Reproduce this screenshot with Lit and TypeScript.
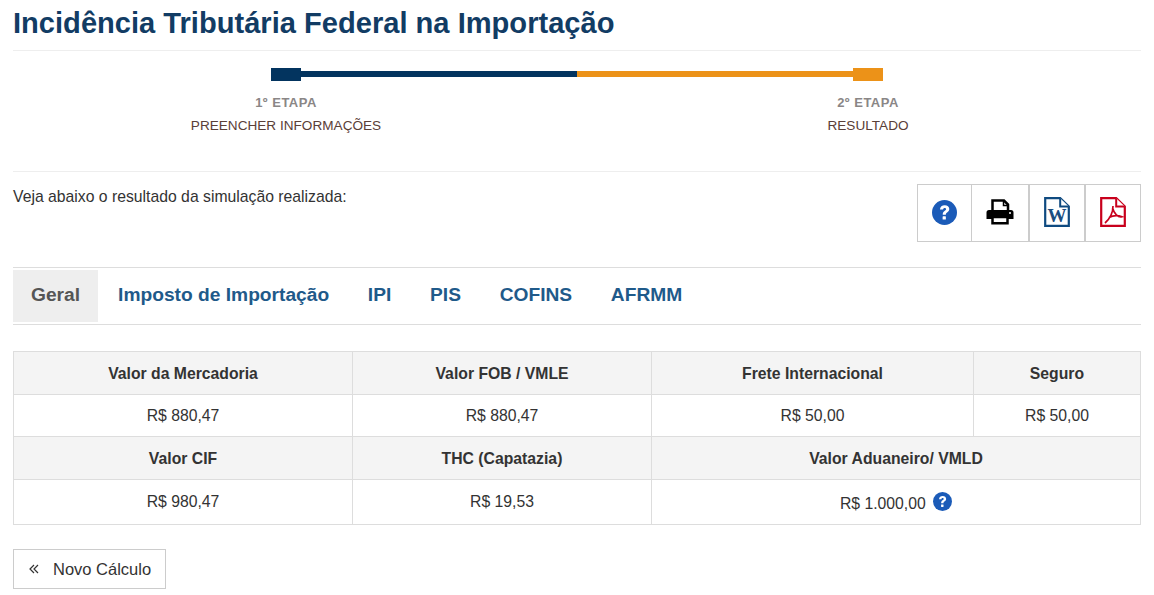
import { LitElement, html, css, svg } from "lit";
import { customElement } from "lit/decorators.js";

const help = (size: number) => html`<svg class="help" width=${size} height=${size} viewBox="0 0 24 24">
  <circle cx="12" cy="12" r="12" fill="#1b5bb8"></circle>
  <path d="M7.600 9.200C7.800 6.400 9.700 5 12.200 5c2.600 0 4.400 1.500 4.400 3.700 0 1.600-.9 2.500-2.100 3.300-1 .7-1.200 1-1.200 2.100h-3c0-1.900.5-2.700 1.700-3.600 1-.7 1.500-1.100 1.500-1.700 0-.7-.6-1.100-1.300-1.100-.9 0-1.500.6-1.600 1.500z" fill="#fff"></path>
  <rect x="10.200" y="15.700" width="3.100" height="3.100" rx=".4" fill="#fff"></rect>
</svg>`;

const printer = svg`<svg width="28" height="26" viewBox="0 0 28 26">
  <path d="M6.500 12V1.500h11.500l4 4V12" fill="#fff" stroke="#000" stroke-width="2.500"></path>
  <path d="M17.500 2v4.500h4.500" fill="none" stroke="#000" stroke-width="1.500"></path>
  <path d="M3 11h22a2.500 2.500 0 0 1 2.500 2.500V20H.5v-6.500A2.500 2.500 0 0 1 3 11z" fill="#000"></path>
  <circle cx="24" cy="14" r="1" fill="#fff"></circle>
  <path d="M6.500 18h15v6.200h-15z" fill="#fff" stroke="#000" stroke-width="2.500"></path>
</svg>`;

const word = svg`<svg width="26" height="30" viewBox="0 0 26 30">
  <path d="M1.200 1.200h15L24.800 9.500V28.800H1.200z" fill="#fff" stroke="#0f4a80" stroke-width="2.200"></path>
  <path d="M16.200 1.200v8.300h8.600" fill="#fff" stroke="#0f4a80" stroke-width="2"></path>
  <text x="13" y="25" text-anchor="middle" font-family="Liberation Serif" font-weight="700" font-size="19" fill="#1c4d80">W</text>
</svg>`;

const pdf = svg`<svg width="26" height="30" viewBox="0 0 26 30">
  <path d="M1.200 1.200h15L24.800 9.500V28.800H1.200z" fill="#fff" stroke="#c8001c" stroke-width="2.200"></path>
  <path d="M16.200 1.200v8.300h8.600" fill="#fff" stroke="#c8001c" stroke-width="2"></path>
  <path d="M13 9c0 6-3 12.500-8 17M9 20.500c4-2 9-2.200 13-.7-4 1-8-3-9.500-9" fill="none" stroke="#c8001c" stroke-width="1.700"></path>
</svg>`;

@customElement("app-root")
export class AppRoot extends LitElement {
  static styles = css`
    :host {
      display: block;
      font-family: "Liberation Sans", Arial, sans-serif;
      padding: 0 13px;
      color: #333;
      font-size: 15.75px;
    }
    h1 {
      margin: 0;
      height: 51px;
      box-sizing: border-box;
      padding-top: 7px;
      line-height: 32px;
      font-size: 29.1px;
      font-weight: 700;
      color: #123c64;
      border-bottom: 1px solid #eee;
    }
    .stepper {
      height: 120px;
      border-bottom: 1px solid #eee;
      padding: 0 258px;
      display: flex;
      flex-direction: column;
    }
    .bar {
      display: flex;
      align-items: flex-start;
      height: 13px;
      margin-top: 17px;
    }
    .bar span { display: block; flex: none; }
    .cap { width: 30px; height: 13px; }
    .bar .line { height: 6px; flex: 1; margin-top: 3px; }
    .blue { background: #03345f; }
    .orange { background: #ec9218; }
    .labels {
      display: flex;
      justify-content: space-between;
      margin: 0 -120px;
      padding-top: 14px;
    }
    .step { width: 270px; text-align: center; }
    .step b {
      display: block;
      font-size: 13px;
      letter-spacing: 0.5px;
      line-height: 16px;
      color: #8a8686;
    }
    .step small {
      display: block;
      margin-top: 7px;
      font-size: 13.6px;
      line-height: 16px;
      color: #5a4038;
    }
    .intro {
      display: flex;
      justify-content: space-between;
      padding-top: 12px;
      box-sizing: border-box;
      border-bottom: 1px solid #ddd;
      height: 96px;
    }
    .intro p { margin: 1px 0 0; line-height: 24px; color: #333; }
    .tools {
      display: flex;
      flex: none;
      align-self: flex-start;
      width: 224px;
      height: 58px;
      box-sizing: border-box;
      border: 1px solid #ccc;
    }
    .tools div {
      display: flex;
      align-items: center;
      justify-content: center;
      flex: none;
      box-sizing: border-box;
      padding-bottom: 2px;
    }
    .tools div:nth-child(1) { width: 54px; border-right: 1px solid #ccc; }
    .tools div:nth-child(2) { width: 58px; border-right: 2px solid #ccc; }
    .tools div:nth-child(3) { width: 56px; border-right: 2px solid #ccc; }
    .tools div:nth-child(4) { width: 54px; }
    .tabs {
      display: flex;
      height: 57px;
      box-sizing: border-box;
      border-bottom: 1px solid #ddd;
      padding-top: 2px;
      margin-bottom: 26px;
    }
    .tab {
      height: 52px;
      line-height: 50px;
      padding: 0 18px;
      font-size: 19.2px;
      font-weight: 700;
      color: #1f5a8a;
      margin-right: 2.7px;
    }
    .tab.active { background: #eee; color: #555; margin-right: 2px; }
    table {
      width: 1127px;
      border-collapse: collapse;
      table-layout: fixed;
      font-size: 15.75px;
      color: #333;
    }
    th, td {
      border: 1px solid #ddd;
      text-align: center;
      padding: 0;
    }
    th { background: #f4f4f4; height: 40px; padding-top: 2px; font-weight: 700; }
    td { height: 41px; }
    tr.last td { height: 44px; }
    .help { vertical-align: -2px; margin-left: 3px; }
    .tools .help { margin-left: 0; }
    .back {
      display: inline-flex;
      align-items: center;
      margin-top: 24px;
      height: 40px;
      width: 153px;
      box-sizing: border-box;
      border: 1px solid #ccc;
      padding-left: 15px;
      color: #333;
      font-size: 16.5px;
      gap: 14px;
    }
  `;

  render() {
    return html`
      <h1>Incidência Tributária Federal na Importação</h1>
      <section class="stepper">
        <div class="bar">
          <span class="cap blue"></span>
          <span class="line blue"></span>
          <span class="line orange"></span>
          <span class="cap orange"></span>
        </div>
        <div class="labels">
          <div class="step"><b>1º ETAPA</b><small>PREENCHER INFORMAÇÕES</small></div>
          <div class="step"><b>2º ETAPA</b><small>RESULTADO</small></div>
        </div>
      </section>
      <section class="intro">
        <p>Veja abaixo o resultado da simulação realizada:</p>
        <div class="tools">
          <div>${help(25)}</div>
          <div>${printer}</div>
          <div>${word}</div>
          <div>${pdf}</div>
        </div>
      </section>
      <nav class="tabs">
        <div class="tab active">Geral</div>
        <div class="tab">Imposto de Importação</div>
        <div class="tab">IPI</div>
        <div class="tab">PIS</div>
        <div class="tab">COFINS</div>
        <div class="tab">AFRMM</div>
      </nav>
      <table>
        <colgroup>
          <col style="width:339px" /><col style="width:299px" /><col style="width:322px" /><col style="width:167px" />
        </colgroup>
        <tr><th>Valor da Mercadoria</th><th>Valor FOB / VMLE</th><th>Frete Internacional</th><th>Seguro</th></tr>
        <tr><td>R$ 880,47</td><td>R$ 880,47</td><td>R$ 50,00</td><td>R$ 50,00</td></tr>
        <tr><th>Valor CIF</th><th>THC (Capatazia)</th><th colspan="2">Valor Aduaneiro/ VMLD</th></tr>
        <tr class="last"><td>R$ 980,47</td><td>R$ 19,53</td><td colspan="2">R$ 1.000,00 ${help(19)}</td></tr>
      </table>
      <div class="back">
        <svg width="10" height="10" viewBox="0 0 10 10"><path d="M5 1 1 5l4 4M9 1 5 5l4 4" fill="none" stroke="#333" stroke-width="1.200"></path></svg>
        <span>Novo Cálculo</span>
      </div>
    `;
  }
}
